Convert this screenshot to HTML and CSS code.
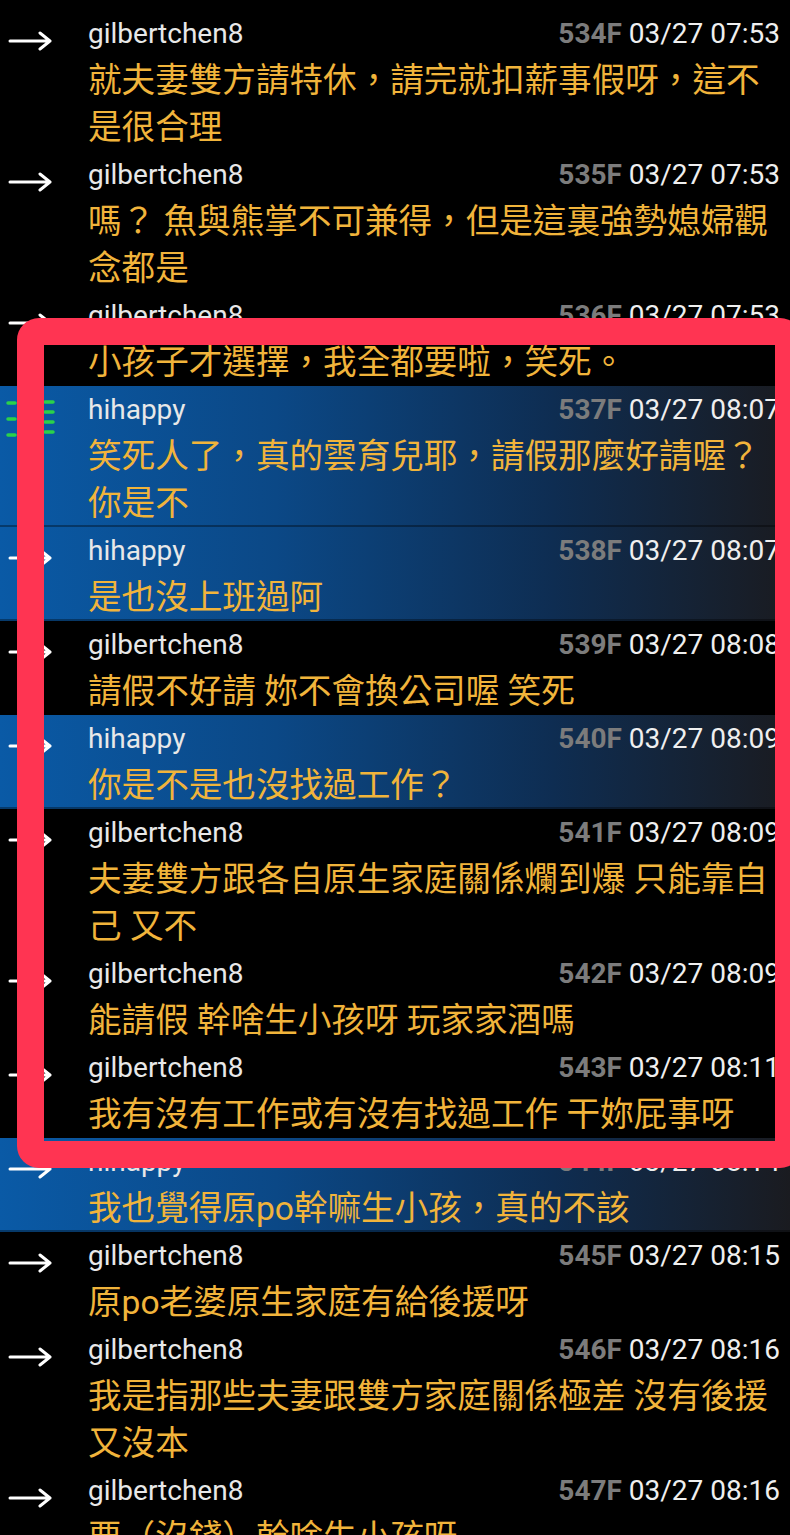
FILE: index.html
```html
<!DOCTYPE html>
<html lang="zh-Hant">
<head>
<meta charset="utf-8">
<title>推文</title>
<link rel="stylesheet" href="styles.css">
</head>
<body>
<div class="list">
  <div class="row">
    <div class="mark"><svg class="arrow" viewBox="0 0 46 20"><path d="M2 10H42M32 2L42 10L32 18" /></svg></div>
    <div class="body">
      <div class="head"><span class="user">gilbertchen8</span><span class="time"><b>534F</b> 03/27 07:53</span></div>
      <div class="text">就夫妻雙方請特休，請完就扣薪事假呀，這不<br>是很合理</div>
    </div>
  </div>
  <div class="row">
    <div class="mark"><svg class="arrow" viewBox="0 0 46 20"><path d="M2 10H42M32 2L42 10L32 18" /></svg></div>
    <div class="body">
      <div class="head"><span class="user">gilbertchen8</span><span class="time"><b>535F</b> 03/27 07:53</span></div>
      <div class="text">嗎？ 魚與熊掌不可兼得，但是這裏強勢媳婦觀<br>念都是</div>
    </div>
  </div>
  <div class="row">
    <div class="mark"><svg class="arrow" viewBox="0 0 46 20"><path d="M2 10H42M32 2L42 10L32 18" /></svg></div>
    <div class="body">
      <div class="head"><span class="user">gilbertchen8</span><span class="time"><b>536F</b> 03/27 07:53</span></div>
      <div class="text">小孩子才選擇，我全都要啦，笑死。</div>
    </div>
  </div>
  <div class="row blue">
    <div class="mark"><svg class="push" viewBox="0 0 60 50"><path d="M8 13H15M8 29H15M8 45H15M45 12H53M45 22H53M45 32H53M45 42H53" /></svg></div>
    <div class="body">
      <div class="head"><span class="user">hihappy</span><span class="time"><b>537F</b> 03/27 08:07</span></div>
      <div class="text">笑死人了，真的雲育兒耶，請假那麼好請喔？<br>你是不</div>
    </div>
  </div>
  <div class="row blue">
    <div class="mark"><svg class="arrow" viewBox="0 0 46 20"><path d="M2 10H42M32 2L42 10L32 18" /></svg></div>
    <div class="body">
      <div class="head"><span class="user">hihappy</span><span class="time"><b>538F</b> 03/27 08:07</span></div>
      <div class="text">是也沒上班過阿</div>
    </div>
  </div>
  <div class="row">
    <div class="mark"><svg class="arrow" viewBox="0 0 46 20"><path d="M2 10H42M32 2L42 10L32 18" /></svg></div>
    <div class="body">
      <div class="head"><span class="user">gilbertchen8</span><span class="time"><b>539F</b> 03/27 08:08</span></div>
      <div class="text">請假不好請 妳不會換公司喔 笑死</div>
    </div>
  </div>
  <div class="row blue">
    <div class="mark"><svg class="arrow" viewBox="0 0 46 20"><path d="M2 10H42M32 2L42 10L32 18" /></svg></div>
    <div class="body">
      <div class="head"><span class="user">hihappy</span><span class="time"><b>540F</b> 03/27 08:09</span></div>
      <div class="text">你是不是也沒找過工作？</div>
    </div>
  </div>
  <div class="row">
    <div class="mark"><svg class="arrow" viewBox="0 0 46 20"><path d="M2 10H42M32 2L42 10L32 18" /></svg></div>
    <div class="body">
      <div class="head"><span class="user">gilbertchen8</span><span class="time"><b>541F</b> 03/27 08:09</span></div>
      <div class="text">夫妻雙方跟各自原生家庭關係爛到爆 只能靠自<br>己 又不</div>
    </div>
  </div>
  <div class="row">
    <div class="mark"><svg class="arrow" viewBox="0 0 46 20"><path d="M2 10H42M32 2L42 10L32 18" /></svg></div>
    <div class="body">
      <div class="head"><span class="user">gilbertchen8</span><span class="time"><b>542F</b> 03/27 08:09</span></div>
      <div class="text">能請假 幹啥生小孩呀 玩家家酒嗎</div>
    </div>
  </div>
  <div class="row">
    <div class="mark"><svg class="arrow" viewBox="0 0 46 20"><path d="M2 10H42M32 2L42 10L32 18" /></svg></div>
    <div class="body">
      <div class="head"><span class="user">gilbertchen8</span><span class="time"><b>543F</b> 03/27 08:11</span></div>
      <div class="text">我有沒有工作或有沒有找過工作 干妳屁事呀</div>
    </div>
  </div>
  <div class="row blue">
    <div class="mark"><svg class="arrow" viewBox="0 0 46 20"><path d="M2 10H42M32 2L42 10L32 18" /></svg></div>
    <div class="body">
      <div class="head"><span class="user">hihappy</span><span class="time"><b>544F</b> 03/27 08:14</span></div>
      <div class="text">我也覺得原po幹嘛生小孩，真的不該</div>
    </div>
  </div>
  <div class="row">
    <div class="mark"><svg class="arrow" viewBox="0 0 46 20"><path d="M2 10H42M32 2L42 10L32 18" /></svg></div>
    <div class="body">
      <div class="head"><span class="user">gilbertchen8</span><span class="time"><b>545F</b> 03/27 08:15</span></div>
      <div class="text">原po老婆原生家庭有給後援呀</div>
    </div>
  </div>
  <div class="row">
    <div class="mark"><svg class="arrow" viewBox="0 0 46 20"><path d="M2 10H42M32 2L42 10L32 18" /></svg></div>
    <div class="body">
      <div class="head"><span class="user">gilbertchen8</span><span class="time"><b>546F</b> 03/27 08:16</span></div>
      <div class="text">我是指那些夫妻跟雙方家庭關係極差 沒有後援<br>又沒本</div>
    </div>
  </div>
  <div class="row">
    <div class="mark"><svg class="arrow" viewBox="0 0 46 20"><path d="M2 10H42M32 2L42 10L32 18" /></svg></div>
    <div class="body">
      <div class="head"><span class="user">gilbertchen8</span><span class="time"><b>547F</b> 03/27 08:16</span></div>
      <div class="text">要（沒錢）幹啥生小孩呀</div>
    </div>
  </div>
</div>
<div class="highlight"></div>
</body>
</html>
```
FILE: styles.css
```css
html, body {
  margin: 0;
  padding: 0;
  background: #000;
  overflow: hidden;
}
body {
  width: 790px;
  height: 1535px;
  position: relative;
  font-family: Roboto, "Noto Sans CJK TC", sans-serif;
}
.list {
  padding-top: 10px;
}
.row {
  display: grid;
  grid-template-columns: 88px 1fr;
  padding-right: 10px;
}
.row.blue {
  background: linear-gradient(90deg, #0a5aa6 0%, #0b4886 35%, #0e2d52 70%, #1a1b20 100%);
  box-shadow: inset 0 -2px 0 rgba(0, 0, 0, 0.35);
}
.mark {
  position: relative;
}
.arrow {
  position: absolute;
  left: 8px;
  top: 21px;
  width: 46px;
  height: 20px;
  fill: none;
  stroke: #fff;
  stroke-width: 3;
  stroke-linecap: round;
  stroke-linejoin: round;
}
.push {
  position: absolute;
  left: 0;
  top: 4px;
  width: 60px;
  height: 50px;
  fill: none;
  stroke: #2bd14a;
  stroke-width: 3.5;
  stroke-linecap: round;
}
.head {
  display: flex;
  justify-content: space-between;
  align-items: center;
  height: 47px;
  font-size: 28px;
  white-space: nowrap;
}
.user {
  color: #e8e8e8;
}
.time {
  color: #efefef;
}
.time b {
  color: #7c7c7c;
  font-weight: 700;
}
.text {
  color: #f1b43b;
  font-family: Roboto, "Noto Sans CJK TC", sans-serif;
  font-size: 33.6px;
  line-height: 47px;
  white-space: nowrap;
}
.highlight {
  position: absolute;
  left: 17px;
  top: 318px;
  width: 785px;
  height: 850px;
  box-sizing: border-box;
  border: 27px solid #ff3452;
  border-radius: 22px;
}
```
